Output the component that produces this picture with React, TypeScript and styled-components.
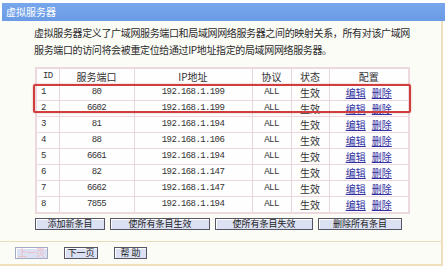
import React from "react";
import styled, { createGlobalStyle } from "styled-components";

const Global = createGlobalStyle`
  html, body { margin: 0; padding: 0; background: #ffffff; }
  body { font-family: "Noto Sans CJK SC", "Noto Sans", sans-serif; }
`;

const Page = styled.div`
  width: 446px;
  height: 267px;
  overflow: hidden;
  background: #ffffff;
  padding-top: 3px;
  box-sizing: border-box;
`;

const TitleBar = styled.div`
  margin: 0 1px 0 2px;
  height: 18px;
  background: linear-gradient(#78a6ec, #6a9be6);
  color: #ffffff;
  font-size: 10px;
  line-height: 18px;
  padding-left: 4px;
`;

const Panel = styled.div`
  width: 441px;
  background: #fcfcf7;
  border-right: 2px solid #efdfbd;
  border-bottom: 2px solid #efdfbd;
`;

const Description = styled.p`
  margin: 0;
  padding: 3px 28px 0 34px;
  font-size: 10px;
  letter-spacing: -0.36px;
  line-height: 17px;
  color: #2a2a2a;
`;

const TableWrap = styled.div`
  position: relative;
  margin: 9px 0 0 35px;
  width: 373px;
`;

const Grid = styled.table`
  border-collapse: collapse;
  width: 373px;
  table-layout: fixed;
  background: #fefefe;
  border: 2px solid #ecd9e0;
`;

const Cell = styled.td<{ $align?: string; $mono?: boolean }>`
  height: 15px;
  padding: 0 0 0 ${(p) => (p.$align === "left" ? "4px" : "0")};
  border: 1px solid #ecd6de;
  text-align: ${(p) => p.$align || "center"};
  font-size: ${(p) => (p.$mono ? "9px" : "10px")};
  letter-spacing: ${(p) => (p.$mono ? "-0.6px" : "0")};
  font-family: ${(p) =>
    p.$mono
      ? '"Liberation Mono", "DejaVu Sans Mono", monospace'
      : '"Noto Sans CJK SC", "Noto Sans", sans-serif'};
  color: #333333;
  line-height: 15px;
  white-space: nowrap;
`;

const HeadCell = styled(Cell).attrs({ as: "th" })`
  font-weight: normal;
`;

const Link = styled.a`
  color: #2f2fa0;
  text-decoration: underline;
  margin: 0 3px;
  cursor: pointer;
`;

const Highlight = styled.div`
  position: absolute;
  left: -2px;
  top: 17px;
  width: 374px;
  height: 25px;
  border: 2px solid #cf3d3d;
  border-radius: 2px;
  box-shadow: 0 0 2px rgba(200, 60, 60, 0.45);
  pointer-events: none;
`;

const ButtonRow = styled.div`
  display: flex;
  gap: 5px;
  padding: 4px 0 11px 35px;
  border-bottom: 1px solid #eadcb9;
`;

const Button = styled.button<{ $w: number; $disabled?: boolean }>`
  width: ${(p) => p.$w}px;
  height: 12px;
  padding: 0;
  box-sizing: border-box;
  background: #dbe1f3;
  border: 1px solid ${(p) => (p.$disabled ? "#a4aac0" : "#555566")};
  box-shadow: inset 1px 1px 0 #ffffff;
  color: ${(p) => (p.$disabled ? "#f2b8c0" : "#222222")};
  font-family: "Noto Sans CJK SC", "Noto Sans", sans-serif;
  font-size: 9px;
  line-height: 10px;
  white-space: nowrap;
  overflow: hidden;
`;

const Footer = styled.div`
  display: flex;
  gap: 16px;
  padding: 5px 0 5px 15px;
`;

const rows = [
  ["1", "80", "192.168.1.199"],
  ["2", "6602", "192.168.1.199"],
  ["3", "81", "192.168.1.194"],
  ["4", "88", "192.168.1.106"],
  ["5", "6661", "192.168.1.194"],
  ["6", "82", "192.168.1.147"],
  ["7", "6662", "192.168.1.147"],
  ["8", "7855", "192.168.1.194"],
];

export default function App() {
  return (
    <Page>
      <Global />
      <TitleBar>虚拟服务器</TitleBar>
      <Panel>
        <Description>
          虚拟服务器定义了广域网服务端口和局域网网络服务器之间的映射关系，所有对该广域网
          服务端口的访问将会被重定位给通过IP地址指定的局域网网络服务器。
        </Description>
        <TableWrap>
          <Grid>
            <colgroup>
              <col style={{ width: 23 }} />
              <col style={{ width: 75 }} />
              <col style={{ width: 118 }} />
              <col style={{ width: 39 }} />
              <col style={{ width: 38 }} />
              <col style={{ width: 80 }} />
            </colgroup>
            <thead>
              <tr>
                <HeadCell $mono>ID</HeadCell>
                <HeadCell>服务端口</HeadCell>
                <HeadCell>IP地址</HeadCell>
                <HeadCell>协议</HeadCell>
                <HeadCell>状态</HeadCell>
                <HeadCell>配置</HeadCell>
              </tr>
            </thead>
            <tbody>
              {rows.map(([id, port, ip]) => (
                <tr key={id}>
                  <Cell $align="left" $mono>{id}</Cell>
                  <Cell $mono>{port}</Cell>
                  <Cell $mono>{ip}</Cell>
                  <Cell $mono>ALL</Cell>
                  <Cell>生效</Cell>
                  <Cell>
                    <Link>编辑</Link>
                    <Link>删除</Link>
                  </Cell>
                </tr>
              ))}
            </tbody>
          </Grid>
          <Highlight />
        </TableWrap>
        <ButtonRow>
          <Button $w={70}>添加新条目</Button>
          <Button $w={100}>使所有条目生效</Button>
          <Button $w={98}>使所有条目失效</Button>
          <Button $w={84}>删除所有条目</Button>
        </ButtonRow>
        <Footer>
          <Button $w={33} $disabled>上一页</Button>
          <Button $w={34}>下一页</Button>
          <Button $w={33}>帮 助</Button>
        </Footer>
      </Panel>
    </Page>
  );
}
